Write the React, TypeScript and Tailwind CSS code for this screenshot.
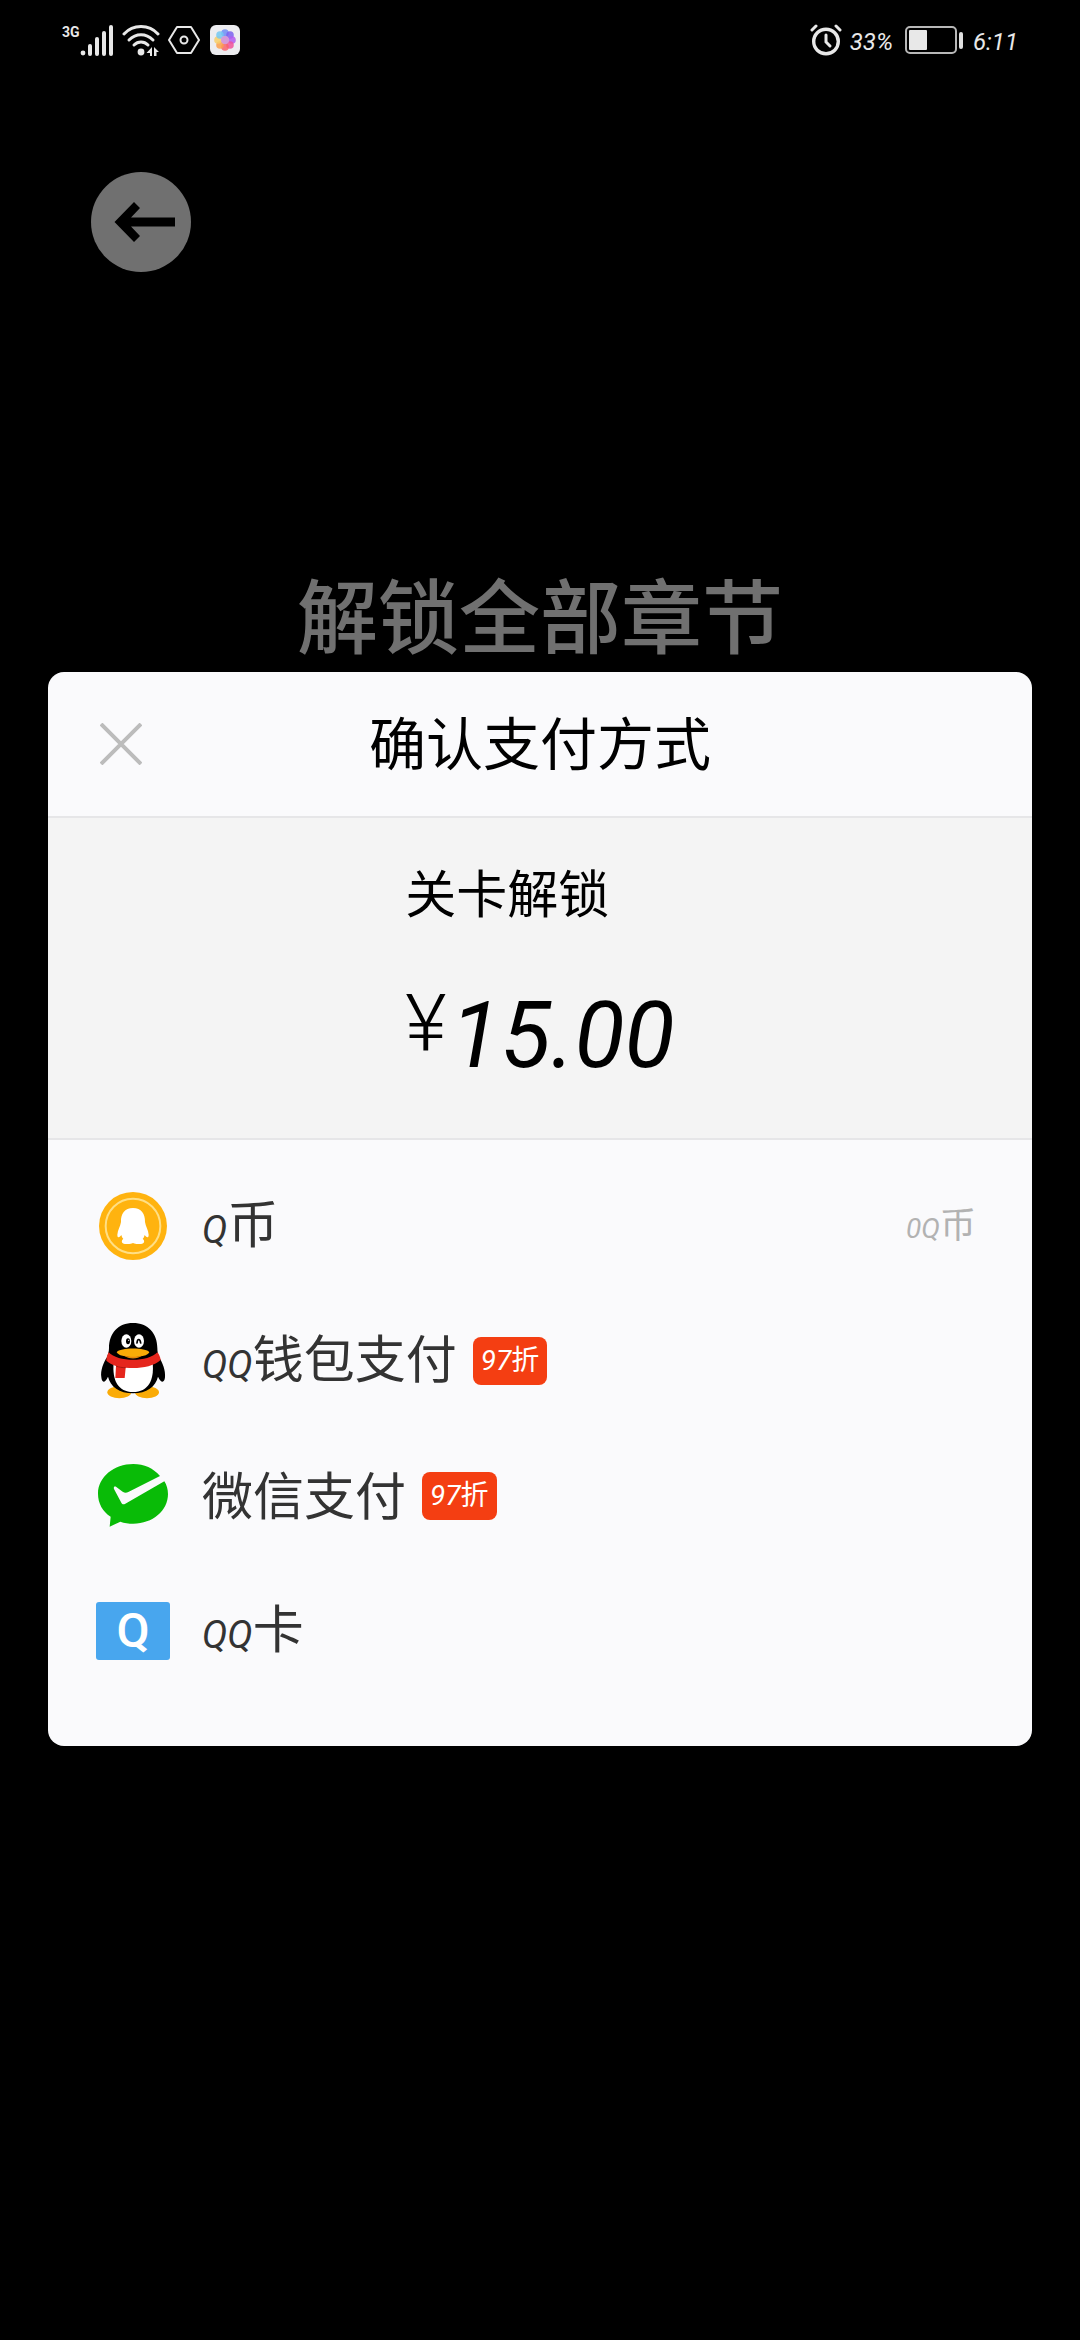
import type { ReactNode } from 'react';

type TPayMethod = {
  id: string;
  latin?: string;
  label: string;
  icon: ReactNode;
  discount?: string;
  balance?: { latin: string; label: string };
};

const StatusBar = () => {
  return (
    <header className="flex h-20 items-center justify-between px-[62px] text-[#e8e8e8]">
      <div className="flex items-center gap-2">
        <div className="flex items-start">
          <span className="text-sm leading-4 font-bold">3G</span>
          <svg width="34" height="32" viewBox="0 0 34 32" fill="currentColor">
            <circle cx="3" cy="29" r="2.4" />
            <rect x="8" y="20" width="4" height="12" rx="2" />
            <rect x="15" y="13" width="4" height="19" rx="2" />
            <rect x="22" y="7" width="4" height="25" rx="2" />
            <rect x="29" y="1" width="4" height="31" rx="2" />
          </svg>
        </div>
        <svg width="38" height="32" viewBox="0 0 38 32" fill="none" stroke="currentColor">
          <path d="M2 10C11 0 27 0 36 10" strokeWidth="3" strokeLinecap="round" />
          <path d="M7 16C14 9 24 9 31 16" strokeWidth="3" strokeLinecap="round" />
          <path d="M12 21C16 17 22 17 26 21" strokeWidth="3" strokeLinecap="round" />
          <circle cx="19" cy="28" r="3.4" fill="currentColor" stroke="none" />
          <path d="M30 23V32H28V29H24.5ZM32 23L37 28H34.5V32H32Z" fill="currentColor" stroke="none" />
        </svg>
        <svg width="32" height="32" viewBox="0 0 32 32" fill="none" stroke="currentColor" strokeWidth="2">
          <path d="M9 3H23L31 16L23 29H9L1 16Z" strokeLinejoin="round" />
          <circle cx="16" cy="16" r="3.5" />
        </svg>
        <svg width="30" height="30" viewBox="0 0 30 30" className="ml-0.5">
          <rect width="30" height="30" rx="6" fill="#ededf0" />
          <circle cx="15" cy="8" r="3.8" fill="#6f8df5" opacity="0.85" />
          <circle cx="20" cy="10" r="3.8" fill="#7a62ee" opacity="0.85" />
          <circle cx="22" cy="15" r="3.8" fill="#b25af0" opacity="0.85" />
          <circle cx="20" cy="20" r="3.8" fill="#f0529a" opacity="0.85" />
          <circle cx="15" cy="22" r="3.8" fill="#f8646c" opacity="0.85" />
          <circle cx="10" cy="20" r="3.8" fill="#fba04c" opacity="0.85" />
          <circle cx="8" cy="15" r="3.8" fill="#f7cf6a" opacity="0.85" />
          <circle cx="10" cy="10" r="3.8" fill="#74c8f2" opacity="0.85" />
          <circle cx="15" cy="15" r="4" fill="#d59ad8" />
        </svg>
      </div>
      <div className="flex items-center gap-2">
        <svg width="32" height="32" viewBox="0 0 32 32" fill="none" stroke="currentColor" strokeLinecap="round">
          <circle cx="16" cy="17.5" r="12.3" strokeWidth="3.4" />
          <path d="M2 6L6 2M30 6L26 2" strokeWidth="3" />
          <path d="M16 11V18L20 22" strokeWidth="3" />
        </svg>
        <span className="pt-1 text-2xl leading-8 italic">33%</span>
        <svg width="60" height="28" viewBox="0 0 60 28" className="ml-1">
          <rect x="1" y="1" width="50" height="26" rx="4" fill="none" stroke="#b8b8b8" strokeWidth="2" />
          <rect x="4" y="4" width="18" height="20" rx="1" fill="#e8e8e8" />
          <rect x="54" y="6" width="4" height="17" rx="2" fill="#e0e0e0" />
        </svg>
        <span className="pt-1 text-2xl leading-8 italic">6:11</span>
      </div>
    </header>
  );
};

const QCoinIcon = () => (
  <svg width="68" height="68" viewBox="0 0 204 204">
    <circle cx="102" cy="102" r="102" fill="#ffb30f" />
    <circle cx="102" cy="102" r="82" fill="none" stroke="#ffdf85" strokeWidth="6" />
    <path
      d="M102 48C77 48 65 66 66 90C64 104 56 114 55 128C55 138 60 138 67 129C68 134 70 138 73 141C66 144 67 156 78 156H91C97 156 100 153 102 153C104 153 107 156 113 156H126C137 156 138 144 131 141C134 138 136 134 137 129C144 138 149 138 149 128C148 114 140 104 138 90C139 66 127 48 102 48Z"
      fill="#fff"
    />
  </svg>
);

const PenguinIcon = () => (
  <svg width="74" height="78" viewBox="0 0 222 234">
    <ellipse cx="70" cy="211" rx="36" ry="18" fill="#faab07" />
    <ellipse cx="153" cy="211" rx="36" ry="18" fill="#faab07" />
    <path
      d="M111 3C66 3 39 34 39 78C39 88 36 97 33 106C22 122 13 146 16 166C18 184 27 183 36 164C43 194 70 214 111 214C152 214 179 194 186 164C195 183 205 184 207 166C209 146 200 122 189 106C186 97 184 88 184 78C184 34 156 3 111 3Z"
      fill="#000"
    />
    <path d="M53 122C48 174 66 210 111 210C157 210 175 174 170 122Z" fill="#fff" />
    <ellipse cx="91" cy="57" rx="15" ry="20" fill="#fff" />
    <ellipse cx="129" cy="57" rx="15" ry="20" fill="#fff" />
    <ellipse cx="96" cy="58" rx="6" ry="9" fill="#000" />
    <circle cx="98" cy="55" r="2" fill="#fff" />
    <path d="M123 63C124 49 132 49 134 63" fill="none" stroke="#000" strokeWidth="5" strokeLinecap="round" />
    <path d="M62 91C72 76 150 76 160 91C153 110 70 110 62 91Z" fill="#faab07" />
    <path d="M84 100C97 106 125 106 138 100C125 113 97 113 84 100Z" fill="#e8860c" />
    <path
      d="M38 91C65 121 157 121 184 91C189 96 193 106 194 114C170 135 128 141 89 137L86 168H58L60 132C49 128 38 122 31 116C31 108 34 98 38 91Z"
      fill="#e5261d"
    />
    <path d="M60 132C69 136 79 137 89 137" fill="none" stroke="#a81812" strokeWidth="3" />
  </svg>
);

const WeChatPayIcon = () => (
  <svg width="70" height="63" viewBox="0 0 210 189">
    <path
      d="M106 0C48 0 0 39 0 89C0 118 14 142 38 158L35 188L67 173C79 177 92 179 106 179C164 179 210 140 210 90C210 76 206 63 199 52L82 119C76 122 73 121 70 116L48 75C46 69 50 66 55 69L74 83C80 87 85 87 91 84L186 36C167 13 138 0 106 0Z"
      fill="#09bb07"
    />
  </svg>
);

const QQCardIcon = () => (
  <span className="flex h-[58px] w-[74px] items-center justify-center rounded-[3px] bg-[#48a6ee] font-[Roboto,sans-serif] text-5xl leading-[58px] font-medium text-white">
    Q
  </span>
);

const payMethods: TPayMethod[] = [
  { id: 'qcoin', latin: 'Q', label: '币', icon: <QCoinIcon />, balance: { latin: '0Q', label: '币' } },
  { id: 'qq-wallet', latin: 'QQ', label: '钱包支付', icon: <PenguinIcon />, discount: '97' },
  { id: 'wechat', label: '微信支付', icon: <WeChatPayIcon />, discount: '97' },
  { id: 'qq-card', latin: 'QQ', label: '卡', icon: <QQCardIcon /> },
];

const PayMethodRow = ({ method }: { method: TPayMethod }) => {
  return (
    <li>
      <button type="button" className="flex h-[135px] w-full items-center pr-14 pl-12 text-left">
        <span className="mr-8 flex w-[74px] shrink-0 justify-center">{method.icon}</span>
        <span className="flex items-baseline pt-1 text-[51px] leading-[60px] text-[#333]">
          {method.latin && <span className="text-[38px] italic">{method.latin}</span>}
          <span>{method.label}</span>
        </span>
        {method.discount && (
          <span className="ml-4 flex h-12 items-center rounded-[8px] bg-[#f43e12] px-2 text-[28px] leading-8 text-white">
            <span className="italic">{method.discount}</span>折
          </span>
        )}
        {method.balance && (
          <span className="ml-auto flex items-baseline pt-1 text-4xl leading-10 text-[#b2b2b2]">
            <span className="text-[28px] italic">{method.balance.latin}</span>
            {method.balance.label}
          </span>
        )}
      </button>
    </li>
  );
};

const PayDialog = () => {
  return (
    <section
      role="dialog"
      aria-labelledby="pay-title"
      className="mx-12 overflow-hidden rounded-[16px] bg-[#fafafc]"
    >
      <div className="grid h-36 grid-cols-[1fr_auto_1fr] items-center px-12">
        <button type="button" aria-label="关闭" className="justify-self-start p-1">
          <svg width="42" height="42" viewBox="0 0 42 42" stroke="#bcbcbc" strokeWidth="4">
            <path d="M1 1L41 41M41 1L1 41" />
          </svg>
        </button>
        <h2 id="pay-title" className="pt-1 text-[57px] leading-[64px] text-black">
          确认支付方式
        </h2>
      </div>
      <div className="flex h-[324px] justify-center border-y-2 border-[#e6e6e8] bg-[#f4f4f4] pt-12 text-black">
        <div>
          <p className="text-[51px] leading-[60px]">关卡解锁</p>
          <p className="mt-12 flex items-start gap-1">
            <span className="text-[80px] leading-[100px] font-light">¥</span>
            <span className="text-[92px] leading-[124px] italic">15.00</span>
          </p>
        </div>
      </div>
      <ul className="pt-[18px] pb-12">
        {payMethods.map((method) => (
          <PayMethodRow key={method.id} method={method} />
        ))}
      </ul>
    </section>
  );
};

export default function App() {
  return (
    <main className="min-h-screen bg-black font-[Roboto,'Noto_Sans_CJK_SC',sans-serif]">
      <StatusBar />
      <button
        type="button"
        aria-label="返回"
        className="mt-[92px] ml-[91px] flex size-[100px] items-center justify-center rounded-full bg-[#707070] pl-2"
      >
        <svg width="62" height="40" viewBox="0 0 62 40" fill="#000">
          <path d="M20 0L26 6L17 15.5H61V24.5H17L26 34L20 40L0.5 20Z" />
        </svg>
      </button>
      <h1 className="mt-[300px] text-center text-[81px] leading-24 font-medium text-[#707070]">解锁全部章节</h1>
      <div className="mt-1">
        <PayDialog />
      </div>
    </main>
  );
}
